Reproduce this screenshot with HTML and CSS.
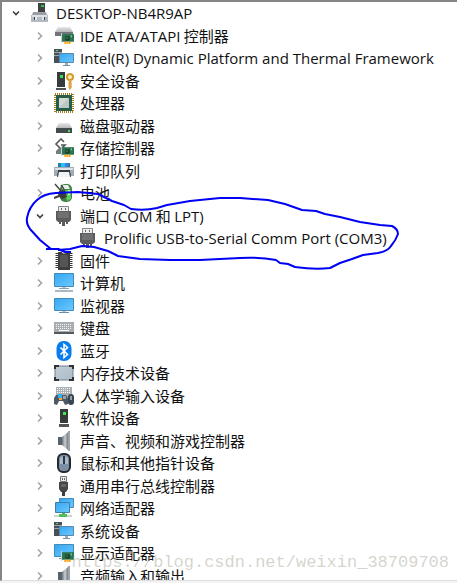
FILE: index.html
```html
<!DOCTYPE html>
<html lang="zh-CN">
<head>
<meta charset="utf-8">
<title>设备管理器</title>
<link rel="stylesheet" href="styles.css">
</head>
<body>
<svg class="defs" aria-hidden="true">
  <defs>
    <linearGradient id="screen" x1="0" y1="0" x2="1" y2="1"><stop offset="0" stop-color="#35a6f2"/><stop offset="1" stop-color="#6cc9ff"/></linearGradient>
    <linearGradient id="metal" x1="0" y1="0" x2="1" y2="0"><stop offset="0" stop-color="#6c747a"/><stop offset=".5" stop-color="#c9ced2"/><stop offset="1" stop-color="#737b82"/></linearGradient>
    <linearGradient id="pale" x1="0" y1="0" x2="1" y2="1"><stop offset="0" stop-color="#c3cdd5"/><stop offset="1" stop-color="#a9bccb"/></linearGradient>
    <linearGradient id="lid" x1="0" y1="0" x2="0" y2="1"><stop offset="0" stop-color="#e6e8ea"/><stop offset="1" stop-color="#b4b8bc"/></linearGradient>
  </defs>
  <symbol id="right" viewBox="0 0 10 10"><path d="M3 1.500 6.500 5 3 8.500" fill="none" stroke="#a4a4a4" stroke-width="1.600"/></symbol>
  <symbol id="down" viewBox="0 0 10 10"><path d="M2 3.500 5 6.500 8 3.500" fill="none" stroke="#404040" stroke-width="1.600"/></symbol>
  <symbol id="root" viewBox="0 0 20 20"><path d="M8 0h7v10H8z" fill="#3f4143"/><path d="M11 2h3v2h-3z" fill="#35c052"/><path d="M3 9h13l1 3H2z" fill="#9a9ea5"/><path d="M1 12h17v7H1z" fill="#b5b9c1"/><path d="M2 12h15v2H2z" fill="#dfe2e8"/><path d="M4 14h3v3H4zm8 0h3v3h-3z" fill="#e4e6ea"/><path d="M4 14h1v3H4zm10 0h1v3h-1z" fill="#3c3f46"/></symbol>
  <symbol id="board" viewBox="0 0 12 10"><path d="M0 1h12v7H0z" fill="#29734e"/><path d="M0 0h1v9H0z" fill="#c5cdc8"/><path d="M4 3h4v4H4z" fill="#173d2b"/><path d="M5 4h1v1H5zm4-2h1v2H9z" fill="#83d19b"/><path d="M3 8h6v2H3z" fill="#ffa51d"/><path d="M5 8v2m2-2v2" stroke="#ffe27a" stroke-width=".6"/></symbol>
  <symbol id="ide" viewBox="0 0 20 20"><path d="M4 1h12l3 5H1z" fill="url(#lid)"/><path d="M1 6h18v4H1z" fill="#70757a"/><use href="#board" x="7" y="7" width="13" height="11"/></symbol>
  <symbol id="system" viewBox="0 0 20 20"><path d="M0 1h8v14H0z" fill="#494f57"/><path d="M0 4h8v1H0zm0 3h8v1H0z" fill="#9da4aa"/><path d="M2 2h2v1H2z" fill="#40df6a"/><path d="M5.500 5.500h14v9h-14z" fill="url(#screen)" stroke="#5a88a8"/><path d="M11 15h3v2h-3z" fill="#9cacb9"/><path d="M9 17h7v1H9z" fill="#7895aa"/></symbol>
  <symbol id="security" viewBox="0 0 20 20"><path d="M3 1h8v15H3z" fill="#373b3e"/><path d="M6 4h3v3H6z" fill="#3ae04b"/><path d="M2 17h10v2H2z" fill="#4e5357"/><circle cx="16" cy="6" r="3" fill="#fff0b8" stroke="#d39a32" stroke-width="2"/><path d="M14.500 9h3v8L16 19l-1.500-2z" fill="#dba547"/><path d="M17 13h1m-1 3h1" stroke="#dba547"/></symbol>
  <symbol id="cpu" viewBox="0 0 20 20"><path d="M1 1h18v18H1z" fill="#fff" stroke="#a27d22" stroke-width="2" stroke-dasharray="1 1"/><path d="M2 2h16v16H2z" fill="#285e46"/><path d="M5 5h10v10H5z" fill="#d1d8d6"/><path d="m5 15 10-10v10z" fill="#bac7c2"/></symbol>
  <symbol id="disk" viewBox="0 0 20 20"><path d="M5 7h10l3 5H2z" fill="url(#lid)"/><path d="M2 12h16v5H2z" fill="#434b4d"/><path d="M14 14h2v2h-2z" fill="#43e35c"/></symbol>
  <symbol id="storage" viewBox="0 0 20 20"><path d="M10 4 7 1 2 6l5 5 4-4H7" fill="none" stroke="#555" stroke-width="1.600"/><path d="m2 13 3-3h4l2 6H2z" fill="#777c7f"/><use href="#board" x="7" y="8" width="13" height="11"/></symbol>
  <symbol id="printer" viewBox="0 0 20 20"><path d="M4 2h12v5H4z" fill="#2a7d9e"/><path d="M7 2h4v4H7z" fill="#20c6fa"/><path d="M11 2h3v4h-3z" fill="#3f7df1"/><path d="M0 6h20v9H0z" fill="#a5abb3"/><path d="M1 7h18v2H1z" fill="#dfe3e7"/><path d="M4 9h12v3H4z" fill="#353b43"/><path d="M3 12h2v4H3zm12 0h2v4h-2z" fill="#50565e"/><path d="M5 11h10l1 5H4z" fill="#f1f3f4"/></symbol>
  <symbol id="battery" viewBox="0 0 20 20"><rect x="6" y="1" width="12" height="18" rx="5" fill="#437e4b"/><path d="M9 2h5l2 4H8z" fill="#e8eee8"/><path d="M10 7h7v9l-4 2z" fill="#5ccf5b"/><path d="M14 7h2v5h-2z" fill="#c8ffc2"/><path d="M1 1 7 8m0-6 3 4" stroke="#454945" stroke-width="1.500"/><path d="m5 8 6-1 2 7-5 2-4-3z" fill="#3b3e3c"/><path d="m0 15 5-2" stroke="#3b3e3c" stroke-width="2"/></symbol>
  <symbol id="port" viewBox="0 0 20 20"><path d="M4.500.5h10v5h-10z" fill="#eee" stroke="#888"/><path d="M7 2h1v2H7zm4 0h1v2h-1z" fill="#666"/><path d="M2 5h15v9l-2 2H4l-2-2z" fill="#5b5c5d"/><path d="M4 7h11M4 9h11M4 11h11" stroke="#858687"/><path d="M5 16h2v2H5zm3 0h3v4H8zm4 0h2v2h-2z" fill="#5b5c5d"/></symbol>
  <symbol id="firmware" viewBox="0 0 20 20"><path d="M3 2v16M17 2v16" stroke="#333" stroke-width="3" stroke-dasharray="1 1"/><path d="M4 1h4c0 2 4 2 4 0h4v18H4z" fill="#3d3d3d"/><path d="M6 4h8v12H6z" fill="#555"/></symbol>
  <symbol id="computer" viewBox="0 0 20 20"><path d="M.5.5h19v13H.5z" fill="url(#screen)" stroke="#438bb9"/><path d="M8 14h4v1H8z" fill="#b9cbd7"/><path d="M5 15h10v1H5z" fill="#8ba1b3"/><path d="M1 17h18v2H1z" fill="#a9b9c6"/></symbol>
  <symbol id="monitor" viewBox="0 0 20 20"><path d="M.5 2.500h19v12H.5z" fill="url(#screen)" stroke="#438bb9"/><path d="M8 15h4v2H8z" fill="#b9cbd7"/><path d="M5 16h10v1H5z" fill="#718da4"/></symbol>
  <symbol id="keyboard" viewBox="0 0 20 20"><path d="M0 4h20v12H0z" fill="#a8adb1"/><path d="M2 6.500h16M2 8.500h16M2 10.500h16" stroke="#f5f6f7" stroke-dasharray="1 1"/><path d="M5 12.500h10" stroke="#fff"/><path d="M0 14h20v2H0z" fill="#54585b"/></symbol>
  <symbol id="bluetooth" viewBox="0 0 20 20"><rect x="2.500" width="15" height="20" rx="7" fill="#087df0"/><path d="m6.500 6.500 7 7-3.500 3v-13l3.500 3-7 7" fill="none" stroke="#fff" stroke-width="1.600"/></symbol>
  <symbol id="memory" viewBox="0 0 20 20"><rect x="1" y="3" width="18" height="14" fill="url(#pale)" stroke="#788087"/><path d="M1 6V3h4M15 3h4v3m0 8v3h-4M5 17H1v-3" fill="none" stroke="#333" stroke-width="2"/></symbol>
  <symbol id="hid" viewBox="0 0 20 20"><path d="M2 1h16v10H2z" fill="#a9afb3"/><path d="M3 2.500h14M3 4.500h14M3 6.500h14" stroke="#fff" stroke-dasharray="1 1"/><path d="M2 9h10l2 3v6l-3 1-2-4H5l-2 4-3-1v-6z" fill="#4d5965"/><path d="M4 8h4v4H4z" fill="#34aef0"/><path d="M5 12h3v2H5z" fill="#ffa33a"/><path d="M9 10h3v3H9z" fill="#96a2ad"/><rect x="14" y="8" width="6" height="11" rx="3" fill="#384552"/><path d="M16 10h2v4h-2z" fill="#91a1b0"/></symbol>
  <symbol id="software" viewBox="0 0 20 20"><path d="M6 1h8v14H6z" fill="#373b3c"/><path d="M9 4h3v3H9z" fill="#3bea45"/><path d="M5 16h10v3H5z" fill="#515557"/></symbol>
  <symbol id="speaker" viewBox="0 0 20 20"><path d="M4 6h4v8H4z" fill="#59636b"/><path d="m8 6 6-5v18l-6-5z" fill="url(#metal)"/><path d="M14 0h2v20h-2z" fill="#9da5ab"/></symbol>
  <symbol id="mouse" viewBox="0 0 20 20"><rect x="4" y="1" width="12" height="18" rx="5" fill="#7b8fa4" stroke="#252a30" stroke-width="2"/><path d="M6 5q4-4 8 0v6H6z" fill="#a8b9c8"/><path d="M10 3v8" stroke="#293543" stroke-width="2"/></symbol>
  <symbol id="usb" viewBox="0 0 20 20"><path d="M6.500.5h6v5h-6z" fill="#eee" stroke="#777"/><path d="M8 2h1v2H8zm2 0h1v2h-1z" fill="#666"/><path d="M5 6h9v7l-2 3H7l-2-3z" fill="#454748"/><path d="M7 8h5v3H7z" fill="#666"/><path d="M8 15h3v5H8z" fill="#3d3e3f"/></symbol>
  <symbol id="network" viewBox="0 0 20 20"><path d="M5.500.5h14v9h-14z" fill="url(#screen)" stroke="#4b8db6"/><path d="M1.500 4.500h14v10h-14z" fill="url(#screen)" stroke="#3d80aa"/><path d="M8 15h3v2H8z" fill="#4ab15c"/><path d="M0 17h18v2H0z" fill="#cbd6ce"/><path d="M5 16h8v3H5z" fill="#51bd5b"/></symbol>
  <symbol id="display" viewBox="0 0 20 20"><path d="M.5 1.500h19v12H.5z" fill="url(#screen)" stroke="#438bb9"/><path d="M5 15h6v1H5z" fill="#7895aa"/><use href="#board" x="7" y="8" width="13" height="11"/></symbol>
</svg>
<main class="window">
  <ul class="tree">
    <li class="row root"><button class="toggle" aria-label="折叠"><svg><use href="#down"/></svg></button><svg class="icon"><use href="#root"/></svg><span class="latin">DESKTOP-NB4R9AP</span></li>
    <li class="row"><button class="toggle" aria-label="展开"><svg><use href="#right"/></svg></button><svg class="icon"><use href="#ide"/></svg><span><span class="latin">IDE ATA/ATAPI</span> 控制器</span></li>
    <li class="row"><button class="toggle" aria-label="展开"><svg><use href="#right"/></svg></button><svg class="icon"><use href="#system"/></svg><span class="latin">Intel(R) Dynamic Platform and Thermal Framework</span></li>
    <li class="row"><button class="toggle" aria-label="展开"><svg><use href="#right"/></svg></button><svg class="icon"><use href="#security"/></svg><span>安全设备</span></li>
    <li class="row"><button class="toggle" aria-label="展开"><svg><use href="#right"/></svg></button><svg class="icon"><use href="#cpu"/></svg><span>处理器</span></li>
    <li class="row"><button class="toggle" aria-label="展开"><svg><use href="#right"/></svg></button><svg class="icon"><use href="#disk"/></svg><span>磁盘驱动器</span></li>
    <li class="row"><button class="toggle" aria-label="展开"><svg><use href="#right"/></svg></button><svg class="icon"><use href="#storage"/></svg><span>存储控制器</span></li>
    <li class="row"><button class="toggle" aria-label="展开"><svg><use href="#right"/></svg></button><svg class="icon"><use href="#printer"/></svg><span>打印队列</span></li>
    <li class="row"><button class="toggle" aria-label="展开"><svg><use href="#right"/></svg></button><svg class="icon"><use href="#battery"/></svg><span>电池</span></li>
    <li class="row"><button class="toggle" aria-label="折叠"><svg><use href="#down"/></svg></button><svg class="icon"><use href="#port"/></svg><span>端口 <span class="latin">(COM</span> 和 <span class="latin">LPT)</span></span></li>
    <li class="row child"><svg class="icon"><use href="#port"/></svg><span class="latin">Prolific USB-to-Serial Comm Port (COM3)</span></li>
    <li class="row"><button class="toggle" aria-label="展开"><svg><use href="#right"/></svg></button><svg class="icon"><use href="#firmware"/></svg><span>固件</span></li>
    <li class="row"><button class="toggle" aria-label="展开"><svg><use href="#right"/></svg></button><svg class="icon"><use href="#computer"/></svg><span>计算机</span></li>
    <li class="row"><button class="toggle" aria-label="展开"><svg><use href="#right"/></svg></button><svg class="icon"><use href="#monitor"/></svg><span>监视器</span></li>
    <li class="row"><button class="toggle" aria-label="展开"><svg><use href="#right"/></svg></button><svg class="icon"><use href="#keyboard"/></svg><span>键盘</span></li>
    <li class="row"><button class="toggle" aria-label="展开"><svg><use href="#right"/></svg></button><svg class="icon"><use href="#bluetooth"/></svg><span>蓝牙</span></li>
    <li class="row"><button class="toggle" aria-label="展开"><svg><use href="#right"/></svg></button><svg class="icon"><use href="#memory"/></svg><span>内存技术设备</span></li>
    <li class="row"><button class="toggle" aria-label="展开"><svg><use href="#right"/></svg></button><svg class="icon"><use href="#hid"/></svg><span>人体学输入设备</span></li>
    <li class="row"><button class="toggle" aria-label="展开"><svg><use href="#right"/></svg></button><svg class="icon"><use href="#software"/></svg><span>软件设备</span></li>
    <li class="row"><button class="toggle" aria-label="展开"><svg><use href="#right"/></svg></button><svg class="icon"><use href="#speaker"/></svg><span>声音、视频和游戏控制器</span></li>
    <li class="row"><button class="toggle" aria-label="展开"><svg><use href="#right"/></svg></button><svg class="icon"><use href="#mouse"/></svg><span>鼠标和其他指针设备</span></li>
    <li class="row"><button class="toggle" aria-label="展开"><svg><use href="#right"/></svg></button><svg class="icon"><use href="#usb"/></svg><span>通用串行总线控制器</span></li>
    <li class="row"><button class="toggle" aria-label="展开"><svg><use href="#right"/></svg></button><svg class="icon"><use href="#network"/></svg><span>网络适配器</span></li>
    <li class="row"><button class="toggle" aria-label="展开"><svg><use href="#right"/></svg></button><svg class="icon"><use href="#system"/></svg><span>系统设备</span></li>
    <li class="row"><button class="toggle" aria-label="展开"><svg><use href="#right"/></svg></button><svg class="icon"><use href="#display"/></svg><span>显示适配器</span></li>
    <li class="row"><button class="toggle" aria-label="展开"><svg><use href="#right"/></svg></button><svg class="icon"><use href="#speaker"/></svg><span>音频输入和输出</span></li>
  </ul>
  <svg class="marking" viewBox="0 0 400 280" aria-hidden="true"><path d="M46 249H58L65 252H71M51 249L40 240 30 229Q26 224 27 218 29 207 37 200 43 194 56 193L78 192 98 194 112 201 124 205 131 209Q145 211 157 208L167 205 190 201 220 198 240 198 268 200 285 204 302 210 316 211 325 214 340 217 360 222 380 225 392 226Q398 229 398 234 396 240 391 246 388 251 378 253L363 255 352 259 340 263 330 268Q315 270 295 267L288 264 280 263 276 260Q260 257 240 258L200 260H170L140 259 118 256 108 251 94 247 82 246 70 249 58 250"/></svg>
  <span class="watermark">https://blog.csdn.net/weixin_38709708</span>
</main>
</body>
</html>
```

FILE: styles.css
```css
* { box-sizing: border-box; }

body {
  margin: 0;
  background: #f4f4f4;
  color: #111;
  font: 15px/22px "Noto Sans CJK SC", sans-serif;
}

.defs {
  position: absolute;
  width: 0;
  height: 0;
}

.window {
  position: relative;
  height: calc(100vh - 2px);
  overflow: hidden;
  background: #fff;
  border-top: 2px solid #858585;
  border-left: 2px solid #858585;
  border-bottom: 1px solid #ddd;
}

.tree {
  display: grid;
  grid-auto-rows: 22px 23px;
  margin: 0;
  padding: 0;
  list-style: none;
}

.row {
  display: flex;
  align-items: center;
  padding-left: 33px;
  white-space: nowrap;
}

.root { padding-left: 9px; }
.child { padding-left: 76px; }

.toggle {
  display: flex;
  width: 10px;
  height: 10px;
  margin-right: 9px;
  padding: 0;
  border: 0;
  background: none;
}

.toggle svg {
  width: 10px;
  height: 10px;
}

.icon {
  flex: none;
  width: 20px;
  height: 20px;
  margin-right: 6px;
}

.latin { font-family: "Open Sans", sans-serif; }

.marking {
  position: absolute;
  top: -2px;
  left: -2px;
  width: 400px;
  height: 280px;
  fill: none;
  stroke: #0000f5;
  stroke-width: 2;
  stroke-linejoin: round;
  pointer-events: none;
}

.watermark {
  position: absolute;
  right: 8px;
  bottom: 7px;
  color: rgb(160 160 145 / 45%);
  font: 17px/20px "Liberation Mono", monospace;
  pointer-events: none;
}
```
